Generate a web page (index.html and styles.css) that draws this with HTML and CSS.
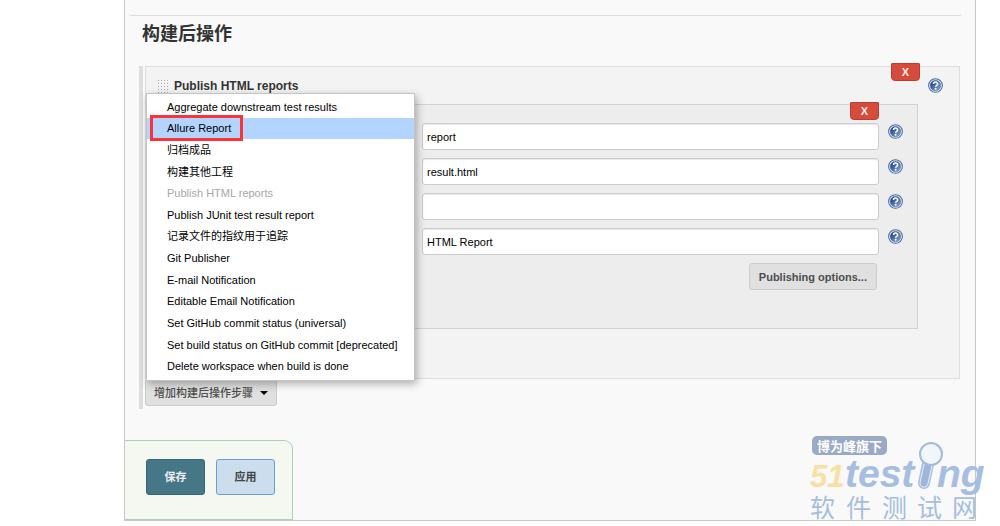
FILE: index.html
```
<!DOCTYPE html>
<html lang="zh-CN">
<head>
<meta charset="utf-8">
<meta name="viewport" content="width=device-width, initial-scale=1">
<title>构建后操作</title>
<link rel="stylesheet" href="styles.css">
</head>
<body>
<svg class="defs" aria-hidden="true">
  <defs>
    <linearGradient id="ball" x1="0" y1="0" x2="1" y2="1">
      <stop offset="0.2" stop-color="#234b8c"/><stop offset="1" stop-color="#8fabd8"/>
    </linearGradient>
    <symbol id="help" viewBox="0 0 16 16">
      <circle cx="8" cy="8" r="7.3" fill="#fff" stroke="#44679f" stroke-width="1.1"/>
      <circle cx="8" cy="8" r="5.7" fill="url(#ball)" stroke="#44679f" stroke-width=".5"/>
      <path d="M5.9 6.5C5.9 3.6 10.3 3.7 10.3 6.3C10.3 7.9 8.3 7.9 8.2 9.4" fill="none" stroke="#fff" stroke-width="1.7"/>
      <circle cx="8.1" cy="11.5" r="1.1" fill="#fff"/>
    </symbol>
  </defs>
</svg>
<main class="panel">
  <form class="config">
    <hr class="divider">
    <h1 class="title">构建后操作</h1>
    <div class="steps">
      <section class="chunk">
        <header class="chunk-head">
          <span class="grip"></span>
          <b class="chunk-name">Publish HTML reports</b>
          <button type="button" class="help" aria-label="Help"><svg><use href="#help"/></svg></button>
        </header>
        <button type="button" class="remove remove-outer">X</button>
        <div class="report">
          <button type="button" class="remove remove-inner">X</button>
          <div class="field">
            <input class="text" type="text" aria-label="HTML directory to archive" value="report">
            <button type="button" class="help" aria-label="Help"><svg><use href="#help"/></svg></button>
          </div>
          <div class="field">
            <input class="text" type="text" aria-label="Index page" value="result.html">
            <button type="button" class="help" aria-label="Help"><svg><use href="#help"/></svg></button>
          </div>
          <div class="field">
            <input class="text" type="text" aria-label="Index page title" value="">
            <button type="button" class="help" aria-label="Help"><svg><use href="#help"/></svg></button>
          </div>
          <div class="field">
            <input class="text" type="text" aria-label="Report title" value="HTML Report">
            <button type="button" class="help" aria-label="Help"><svg><use href="#help"/></svg></button>
          </div>
          <div class="options"><button type="button" class="btn">Publishing options...</button></div>
        </div>
      </section>
      <div class="add">
        <button type="button" class="btn btn-add">增加构建后操作步骤<span class="caret"></span></button>
        <ul class="menu">
          <li class="item">Aggregate downstream test results</li>
          <li class="item item-active"><span class="mark">Allure Report</span></li>
          <li class="item">归档成品</li>
          <li class="item">构建其他工程</li>
          <li class="item item-off">Publish HTML reports</li>
          <li class="item">Publish JUnit test result report</li>
          <li class="item">记录文件的指纹用于追踪</li>
          <li class="item">Git Publisher</li>
          <li class="item">E-mail Notification</li>
          <li class="item">Editable Email Notification</li>
          <li class="item">Set GitHub commit status (universal)</li>
          <li class="item">Set build status on GitHub commit [deprecated]</li>
          <li class="item">Delete workspace when build is done</li>
        </ul>
      </div>
    </div>
    <footer class="actions">
      <button type="button" class="action save">保存</button>
      <button type="button" class="action apply">应用</button>
    </footer>
  </form>
  <svg class="brand" viewBox="0 0 180 92" role="img" aria-label="51testing">
    <rect x="3" y="2" width="75" height="19" rx="5" fill="#9aa9c6"/>
    <text class="brand-tag" x="8" y="17">博为峰旗下</text>
    <text class="brand-num" x="1" y="53">51</text>
    <text class="brand-word" x="36" y="53">test</text>
    <text class="brand-word" x="128" y="53">ng</text>
    <path d="M119 30l-4 19" fill="none" stroke="#a6bedf" stroke-width="12" stroke-linecap="round"/>
    <path d="M119 31l-4 18" fill="none" stroke="#e6edf6" stroke-width="9" stroke-linecap="round"/>
    <path d="M119 31l-4 18" fill="none" stroke="#9fb6d8" stroke-width="7" stroke-linecap="round"/>
    <circle cx="122" cy="20" r="11" fill="#f2f6fb" stroke="#a0bbdd" stroke-width="2"/>
    <text class="brand-sub" y="83" x="1 37 73 108 143">软件测试网</text>
  </svg>
</main>
</body>
</html>
```
FILE: styles.css
```
* { box-sizing: border-box; }
body {
  margin: 0;
  background: #fff;
  color: #333;
  font: 11px/16px "Liberation Sans", "Noto Sans CJK SC", sans-serif;
}
button, input { font: inherit; }
.defs { position: absolute; width: 0; height: 0; }
.panel {
  position: relative;
  margin: 0 24px 5px 124px;
  border: 1px solid #c8c8c8;
  border-top: 0;
  background: #f9f9f9;
}
.divider { margin: 0 14px 0 5px; padding-top: 15px; border: 0; border-bottom: 1px solid #ddd; }
.title { margin: 6px 17px 19px; font-size: 18px; line-height: 25px; font-weight: bold; }
.steps { margin: 0 15px 0 14px; padding-left: 2px; border-left: 4px solid #ddd; }
.chunk { position: relative; height: 313px; border: 1px solid #dedede; background: #f3f3f3; }
.chunk-head { display: flex; align-items: center; height: 37px; padding: 0 16px 0 11px; }
.grip {
  width: 12px;
  height: 14px;
  background: radial-gradient(circle, #aaa 1px, transparent 1px) 0 0 / 3px 3px;
}
.chunk-name { flex: 1; margin-left: 5px; font-size: 12px; }
.help { display: flex; padding: 0; border: 0; background: none; }
.help svg { width: 15px; height: 15px; }
.field .help { margin-top: 1px; }
.remove {
  position: absolute;
  width: 29px;
  height: 18px;
  padding: 0;
  border: 1px solid #bf3b2e;
  border-radius: 1px 1px 4px 4px;
  background: #d54c3c;
  color: #f7eeee;
  font-weight: bold;
  line-height: 16px;
}
.remove-outer { top: -4px; right: 39px; }
.remove-inner { top: -3px; right: 38px; }
.report {
  position: relative;
  display: flex;
  flex-direction: column;
  gap: 8px;
  margin: 0 41px 0 29px;
  padding: 18px 14px 38px 246px;
  border: 1px solid #d2d2d2;
  background: #ededed;
}
.field { display: flex; align-items: flex-start; gap: 9px; }
.text {
  flex: 1;
  min-width: 0;
  height: 27px;
  padding: 0 4px;
  border: 1px solid #ccc;
  border-radius: 3px;
  background: #fff;
  color: #000;
  box-shadow: inset 0 1px 1px #e8e8e8;
}
.options { display: flex; justify-content: flex-end; margin-right: 26px; }
.btn {
  height: 27px;
  padding: 0 9px;
  border: 1px solid #ccc;
  border-radius: 3px;
  background: #e0e0e0;
  color: #4d4d4d;
  font-weight: bold;
}
.add { position: relative; display: flex; padding-bottom: 3px; }
.btn-add { display: flex; align-items: center; padding: 0 8px; font-weight: 500; }
.caret { margin-left: 7px; border: 4px solid transparent; border-top-color: #000; border-bottom: 0; }
.menu {
  position: absolute;
  bottom: 28px;
  left: 1px;
  display: grid;
  grid-template-columns: minmax(0, 1fr);
  grid-auto-rows: minmax(0, 1fr);
  width: 269px;
  height: 288px;
  margin: 0;
  padding: 2px 0 3px;
  border: 1px solid #c4c4c4;
  background: #fff;
  box-shadow: 2px 3px 8px rgba(0, 0, 0, .3);
  color: #000;
  list-style: none;
  white-space: nowrap;
}
.item { display: flex; align-items: center; padding: 0 16px 0 20px; }
.item-active { background: #b3d4ff; }
.item-off { color: #a6a6a6; }
.mark { margin: -2px 0 -2px -17px; padding: 2px 9px 2px 14px; border: 3px solid #fb3338; }
.actions {
  display: inline-flex;
  gap: 11px;
  margin-top: 31px;
  padding: 18px 17px 24px 21px;
  border: 1px solid #aacfba;
  border-left: 0;
  border-radius: 0 9px 0 0;
  background: #f5f8f1;
  vertical-align: top;
}
.action { width: 59px; height: 36px; padding: 0; border: 1px solid; border-radius: 3px; font-weight: bold; }
.save { border-color: #376573; background: #457787; color: #eee; }
.apply { border-color: #6d9cd2; background: #ccddee; color: #444; }
.brand { position: absolute; right: -14px; bottom: -6px; width: 180px; height: 92px; overflow: visible; }
.brand-tag { fill: #fff; font: bold 13px "Noto Sans CJK SC", sans-serif; }
.brand-num { fill: #f8dfa3; font: italic bold 31px "Liberation Sans", sans-serif; }
.brand-word { fill: #a6bedf; font: italic bold 39px "Liberation Sans", sans-serif; }
.brand-sub { fill: #a6bedf; font: 25px "Noto Sans CJK SC", sans-serif; }
```
